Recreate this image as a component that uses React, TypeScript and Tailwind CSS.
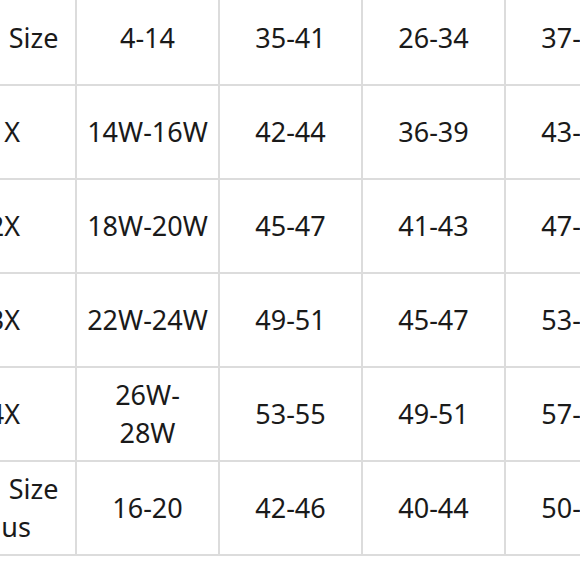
const ROWS: string[][] = [
  ["Girl\u2002Size", "4-14", "35-41", "26-34", "37-43"],
  ["1X", "14W-16W", "42-44", "36-39", "43-46"],
  ["2X", "18W-20W", "45-47", "41-43", "47-49"],
  ["3X", "22W-24W", "49-51", "45-47", "53-55"],
  ["4X", "26W-\n28W", "53-55", "49-51", "57-59"],
  ["Girl\u2002Size\nPlus", "16-20", "42-46", "40-44", "50-54"],
];

export default function App() {
  return (
    <div className="w-[580px] h-[580px] overflow-hidden bg-white">
      <div
        className="-ml-[68px] -mt-[10px] w-max grid grid-cols-[repeat(5,141px)] auto-rows-[92px] gap-[2px] p-[2px] bg-[#dcdcdc] text-[27px] leading-[38px] text-[#1a1a1a]"
        style={{ fontFamily: '"Noto Sans", "Open Sans", sans-serif' }}
      >
        {ROWS.flatMap((row, ri) =>
          row.map((cell, ci) => (
            <div
              key={`${ri}-${ci}`}
              className="bg-white flex items-center justify-center text-center whitespace-pre-line"
            >
              {cell}
            </div>
          ))
        )}
      </div>
    </div>
  );
}
